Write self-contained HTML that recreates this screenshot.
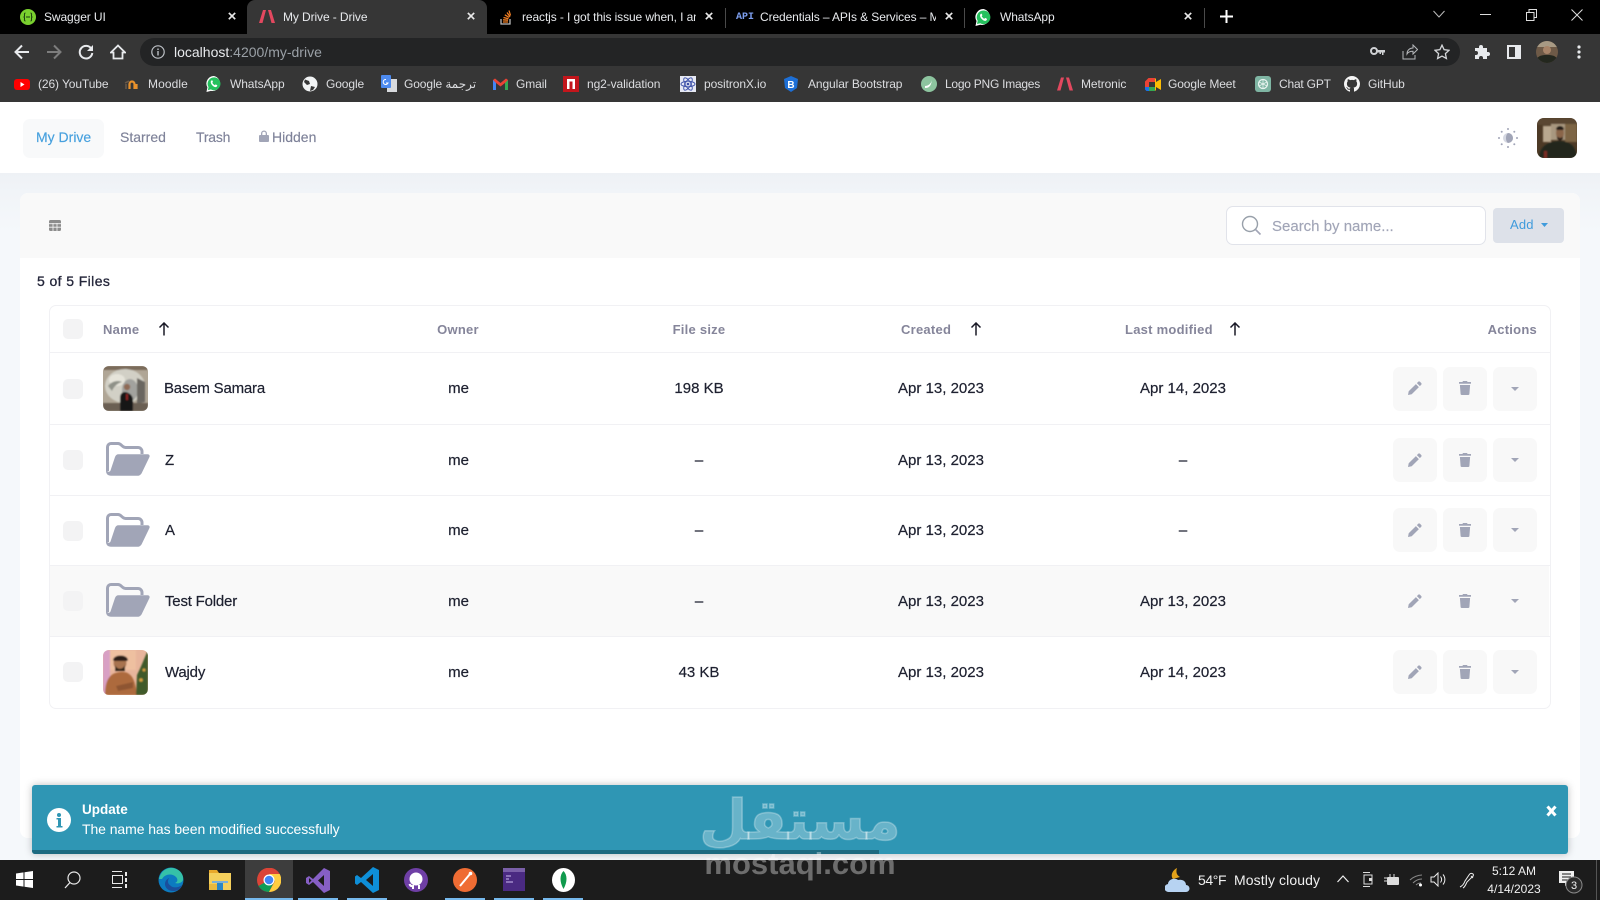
<!DOCTYPE html>
<html><head><meta charset="utf-8"><title>My Drive - Drive</title>
<style>
html,body{margin:0;padding:0;width:1600px;height:900px;overflow:hidden;background:#f5f8fb;font-family:"Liberation Sans","Noto Sans CJK SC",sans-serif}
.a,.t,svg.i{position:absolute}
.t{white-space:nowrap}
.tab{font-size:12px;color:#e8eaed;line-height:16px;top:9px;letter-spacing:-.1px}
.x{font-size:15px;color:#e8e8e8;top:8px;line-height:18px;font-weight:700;transform:translateX(-50%)}
.bm{font-size:12px;color:#dcdde0;line-height:16px;top:76px;letter-spacing:-.1px}
.nav{font-size:14px;line-height:18px;top:128px;color:#7e8299;letter-spacing:0;-webkit-text-stroke:.15px}
.h{font-size:13px;font-weight:700;line-height:16px;top:322px;color:#85859a;letter-spacing:.25px}
.c{transform:translateX(-50%)}
.r{font-size:15px;line-height:18px;color:#1e2130;letter-spacing:0;-webkit-text-stroke:.2px #1e2130}
.n{letter-spacing:-.2px}
.ln{position:absolute;left:49px;width:1501px;height:1px;background:#f1f1f4}
.cb{position:absolute;left:63px;width:20px;height:20px;border-radius:5px;background:#f3f3f4}
.btn{position:absolute;width:44px;height:44px;border-radius:7px;background:#f8f8f8}
.tb{position:absolute;top:898px;height:2px;background:#76b9ed}
</style></head>
<body>
<svg width="0" height="0" style="position:absolute">
<defs>
<symbol id="pen" viewBox="0 0 14 14"><path d="M10.2.8c.5-.5 1.3-.5 1.8 0l1.2 1.2c.5.5.5 1.3 0 1.8l-1.3 1.3-3-3zM7.9 3.1l3 3-7.2 7.2L0 14l.7-3.7z" fill="#a1a5b7"/></symbol>
<symbol id="trash" viewBox="0 0 12 14"><path d="M4 0h4l.6 1H12v1.8H0V1h3.4zM.9 4h10.2l-.7 9c0 .6-.6 1-1.1 1H2.700c-.5 0-1.100-.4-1.100-1z" fill="#a1a5b7"/></symbol>
<symbol id="car" viewBox="0 0 8 4"><path d="M0 0h8L4 4z" fill="#a1a5b7"/></symbol>
<symbol id="fold" viewBox="0 0 44 34"><path d="M1.500 29V5a3.500 3.500 0 0 1 3.500-3.500h7c3.500 0 4 4 7.500 4H32a4 4 0 0 1 4 4V12" fill="none" stroke="#a1a5b7" stroke-width="3"/><path d="M9 15c.6-1.800 1.800-2.800 3.500-2.800H41.500c1.800 0 2.600 1.300 1.900 2.900L36 30.500c-.9 2-2.300 3.300-4.500 3.300H5c-3 0-5-1.800-5-5V26l1 2.500c1 1.800 3 1.500 3.500 0z" fill="#a1a5b7"/></symbol>
<symbol id="arr" viewBox="0 0 12 14"><path d="M6 13.500V1M1.500 5.500 6 1l4.500 4.500" fill="none" stroke="#1a1a27" stroke-width="1.500"/></symbol>
</defs></svg>

<!-- Browser chrome -->
<div class="a" style="left:0;top:0;width:1600px;height:34px;background:#000"></div>
<div class="a" style="left:0;top:34px;width:1600px;height:68px;background:#363636"></div>
<div class="a" style="left:247px;top:0;width:240px;height:34px;background:#363636;border-radius:8px 8px 0 0"></div>
<div class="a" style="left:140px;top:38px;width:1320px;height:28px;background:#232425;border-radius:14px"></div>

<svg class="i" style="left:20px;top:9px" width="16" height="16" viewBox="0 0 16 16"><circle cx="8" cy="8" r="8" fill="#7ad02f"/><path d="M5.500 4c-1.500 0-1 2-1 3s-1 1-1 1 1 0 1 1-.5 3 1 3M10.500 4c1.500 0 1 2 1 3s1 1 1 1-1 0-1 1 .5 3-1 3M6 8h4" fill="none" stroke="#1a3a10" stroke-width="1"/></svg>
<div class="t tab" style="left:44px">Swagger UI</div>
<div class="t x" style="left:232px">×</div>
<svg class="i" style="left:259px;top:10px" width="16" height="13" viewBox="0 0 16 13"><path d="M4 0h3L3.500 13H0zM9 0h3l4 13h-3.500z" fill="#e3485f"/></svg>
<div class="t tab" style="left:283px">My Drive - Drive</div>
<div class="t x" style="left:471px">×</div>
<svg class="i" style="left:499px;top:9px" width="14" height="16" viewBox="0 0 14 16"><path d="M2 10v5h9v-5" fill="none" stroke="#bcbbbb" stroke-width="1.300"/><path d="M4 13h5M4 10.800l5 .4M4.500 8.500l5 1.300M5.800 5.800l4.400 2.700M8 3.500l3 4.200M10 1.500l1.500 5" stroke="#f48024" stroke-width="1.300" fill="none"/></svg>
<div class="t tab" style="left:522px;width:174px;overflow:hidden">reactjs - I got this issue when, I am</div>
<div class="t x" style="left:709px">×</div>
<div class="a" style="left:725px;top:8px;width:1px;height:20px;background:#4a4a4a"></div>
<div class="t" style="left:736px;top:11px;font:700 10px/14px 'Liberation Mono',monospace;color:#7d9ff0">API</div>
<div class="t tab" style="left:760px;width:176px;overflow:hidden">Credentials – APIs &amp; Services – My</div>
<div class="t x" style="left:949px">×</div>
<div class="a" style="left:964px;top:8px;width:1px;height:20px;background:#4a4a4a"></div>
<svg class="i" style="left:975px;top:9px" width="17" height="17" viewBox="0 0 17 17"><path d="M8.500 0a8 8 0 0 0-7 12L.5 17l4.700-1.200A8 8 0 1 0 8.500 0z" fill="#fff"/><path d="M8.500 1.500a6.800 6.800 0 0 0-5.800 10.300l-.7 3.200 3.200-.8A6.800 6.800 0 1 0 8.500 1.500z" fill="#25c15e"/><path d="M6 4.700c-1.500.8-1.200 3 .5 5 1.800 2 4 2.800 5 1.500.6-.8.500-1.400.3-1.500l-1.600-.8-.8.900c-1-.3-2.200-1.500-2.700-2.700l.7-.8-.6-1.600z" fill="#fff"/></svg>
<div class="t tab" style="left:1000px">WhatsApp</div>
<div class="t x" style="left:1188px">×</div>
<div class="a" style="left:1204px;top:8px;width:1px;height:20px;background:#4a4a4a"></div>
<svg class="i" style="left:1220px;top:10px" width="13" height="13"><path d="M6.500 0v13M0 6.500h13" stroke="#fff" stroke-width="2"/></svg>
<svg class="i" style="left:1433px;top:10px" width="12" height="8"><path d="M.5 1 6 7l5.500-6" stroke="#bbb" fill="none"/></svg>
<div class="a" style="left:1480px;top:14px;width:11px;height:1px;background:#ddd"></div>
<svg class="i" style="left:1526px;top:9px" width="11" height="12"><path d="M.5 3.500h7.500v8H.5zM3 3.500V.5h7.500v8H8" stroke="#ddd" fill="none"/></svg>
<svg class="i" style="left:1571px;top:9px" width="12" height="12"><path d="M.5.500l11 11M11.500.500l-11 11" stroke="#ddd"/></svg>

<svg class="i" style="left:14px;top:44px" width="16" height="16" viewBox="0 0 16 16"><path d="M15 8H2M8 1.500 1.500 8 8 14.500" stroke="#e8eaed" stroke-width="2" fill="none"/></svg>
<svg class="i" style="left:46px;top:44px" width="16" height="16" viewBox="0 0 16 16"><path d="M1 8h13M8 1.500 14.500 8 8 14.500" stroke="#7d7d7d" stroke-width="2" fill="none"/></svg>
<svg class="i" style="left:78px;top:44px" width="16" height="16" viewBox="0 0 16 16"><path d="M13.500 5A6.300 6.300 0 1 0 14.300 9" stroke="#e8eaed" stroke-width="2" fill="none"/><path d="M15 1v6H9z" fill="#e8eaed"/></svg>
<svg class="i" style="left:110px;top:44px" width="16" height="16" viewBox="0 0 16 16"><path d="M8 1.500.9 8.500h2.600v6h9v-6h2.600zM8 2.500" stroke="#e8eaed" stroke-width="1.800" fill="none"/></svg>
<svg class="i" style="left:151px;top:45px" width="14" height="14" viewBox="0 0 14 14"><circle cx="7" cy="7" r="6.200" stroke="#bdc1c6" stroke-width="1.200" fill="none"/><path d="M7 6v4.500M7 3.500v1.500" stroke="#bdc1c6" stroke-width="1.400"/></svg>
<div class="t" style="left:174px;top:44px;font-size:14px;line-height:16px;color:#e8eaed">localhost<span style="color:#9aa0a6">:4200/my-drive</span></div>

<svg class="i" style="left:1370px;top:47px" width="15" height="10" viewBox="0 0 15 10"><circle cx="4" cy="4" r="3" stroke="#cfd1d4" stroke-width="2" fill="none"/><path d="M6.500 3H15v2.500h-1.500V8H12V5.500h-1V7H9.500V5.500H6.500z" fill="#cfd1d4"/></svg>
<svg class="i" style="left:1402px;top:44px" width="16" height="16" viewBox="0 0 16 16"><path d="M1 7v8h12V11M5 10c0-4 3-6 6-6V1l4.500 4.500L11 10V7.300c-3 0-5 1-6 2.700z" stroke="#b5b7ba" fill="none"/></svg>
<svg class="i" style="left:1434px;top:44px" width="16" height="16" viewBox="0 0 16 16"><path d="M8 1.200l2.100 4.500 4.900.6-3.600 3.300 1 4.900L8 12.100l-4.400 2.400 1-4.900L1 6.300l4.900-.6z" stroke="#d5d7da" stroke-width="1.300" fill="none"/></svg>
<svg class="i" style="left:1474px;top:44px" width="16" height="16" viewBox="0 0 16 16"><path d="M1 4h4V3a2 2 0 0 1 4 0v1h4v4h1a2 2 0 0 1 0 4h-1v3H9v-1a2 2 0 0 0-4 0v1H1v-4h1a2 2 0 0 0 0-4H1z" fill="#e8eaed"/></svg>
<svg class="i" style="left:1507px;top:45px" width="14" height="14"><rect x="1" y="1" width="12" height="12" fill="none" stroke="#e8eaed" stroke-width="2"/><rect x="8" y="1" width="5" height="12" fill="#e8eaed"/></svg>
<svg class="i" style="left:1536px;top:41px" width="22" height="22" viewBox="0 0 22 22"><defs><clipPath id="av"><circle cx="11" cy="11" r="11"/></clipPath></defs><g clip-path="url(#av)"><rect width="22" height="22" fill="#6e5a47"/><rect y="0" width="22" height="6" fill="#a89a84"/><circle cx="11" cy="9" r="4" fill="#a88468"/><path d="M0 22c0-7 5-8 11-8s11 1 11 8z" fill="#23271e"/></g></svg>
<svg class="i" style="left:1577px;top:45px" width="4" height="14"><circle cx="2" cy="2" r="1.600" fill="#e8eaed"/><circle cx="2" cy="7" r="1.600" fill="#e8eaed"/><circle cx="2" cy="12" r="1.600" fill="#e8eaed"/></svg>

<!-- Bookmarks -->
<svg class="i" style="left:14px;top:79px" width="16" height="11"><rect width="16" height="11" rx="3" fill="#f00"/><path d="M6.500 3v5l4-2.500z" fill="#fff"/></svg>
<div class="t bm" style="left:38px">(26) YouTube</div>
<svg class="i" style="left:124px;top:78px" width="16" height="12" viewBox="0 0 16 12"><path d="M5.500 11V6a2.500 2.500 0 0 1 5 0v5M12.500 11V6" stroke="#e8912b" stroke-width="2.200" fill="none"/><path d="M1 5l4-2M2 11V6" stroke="#6a5a4a" stroke-width="1.500" fill="none"/></svg>
<div class="t bm" style="left:148px;letter-spacing:.1px">Moodle</div>
<svg class="i" style="left:206px;top:76px" width="16" height="16" viewBox="0 0 17 17"><path d="M8.500 0a8 8 0 0 0-7 12L.5 17l4.700-1.200A8 8 0 1 0 8.500 0z" fill="#fff"/><path d="M8.500 1.500a6.800 6.800 0 0 0-5.800 10.300l-.7 3.200 3.200-.8A6.800 6.800 0 1 0 8.500 1.500z" fill="#25c15e"/><path d="M6 4.700c-1.500.8-1.200 3 .5 5 1.800 2 4 2.800 5 1.500.6-.8.500-1.400.3-1.500l-1.600-.8-.8.900c-1-.3-2.200-1.500-2.700-2.700l.7-.8-.6-1.600z" fill="#fff"/></svg>
<div class="t bm" style="left:230px">WhatsApp</div>
<svg class="i" style="left:302px;top:76px" width="16" height="16" viewBox="0 0 16 16"><circle cx="8" cy="8" r="7.500" fill="#f1f3f4"/><path d="M3 3.500 7 5l1 3-3 1-3-3zM9 10l4 1-2 3-3 1z" fill="#363636"/></svg>
<div class="t bm" style="left:326px">Google</div>
<svg class="i" style="left:381px;top:75px" width="16" height="18" viewBox="0 0 16 18"><rect x="6" y="4" width="10" height="13" fill="#d8dadd"/><rect width="10" height="13" rx="1" fill="#4d8bf0"/><path d="M5 4.500a2.500 2.500 0 1 0 2 3.500H5" stroke="#fff" fill="none"/></svg>
<div class="t bm" style="left:404px;font-family:'Liberation Sans','DejaVu Sans',sans-serif">Google ترجمة</div>
<svg class="i" style="left:493px;top:78px" width="15" height="12" viewBox="0 0 15 12"><path d="M0 2v10h3V5l4.500 3.500L12 5v7h3V2L13 .5 7.500 5 2 .5z" fill="#ea4335"/><path d="M0 2v10h3V5z" fill="#4285f4"/><path d="M12 5v7h3V2z" fill="#34a853"/></svg>
<div class="t bm" style="left:516px">Gmail</div>
<svg class="i" style="left:563px;top:76px" width="16" height="16"><rect width="16" height="16" fill="#c3161c"/><path d="M4 13V3h8v10H9.500V5.500h-3V13z" fill="#fff"/></svg>
<div class="t bm" style="left:587px">ng2-validation</div>
<svg class="i" style="left:680px;top:76px" width="16" height="16" viewBox="0 0 16 16"><rect width="16" height="16" fill="#e6e9f4"/><g stroke="#3b4fa8" fill="none" stroke-width=".9"><ellipse cx="8" cy="8" rx="7" ry="2.800"/><ellipse cx="8" cy="8" rx="7" ry="2.800" transform="rotate(60 8 8)"/><ellipse cx="8" cy="8" rx="7" ry="2.800" transform="rotate(120 8 8)"/></g><circle cx="8" cy="8" r="1.300" fill="#3b4fa8"/></svg>
<div class="t bm" style="left:704px">positronX.io</div>
<svg class="i" style="left:783px;top:76px" width="16" height="16"><path d="M8 0l7 3-1 9-6 4-6-4-1-9z" fill="#1d6fd6"/><text x="8" y="12" font-size="10" font-weight="700" text-anchor="middle" fill="#fff" font-family="Liberation Sans">B</text></svg>
<div class="t bm" style="left:808px">Angular Bootstrap</div>
<svg class="i" style="left:921px;top:76px" width="16" height="16"><circle cx="8" cy="8" r="8" fill="#8dc49f"/><path d="M4 10c3 0 6-2 7-6-1 5-2 8-7 8z" fill="#fff"/></svg>
<div class="t bm" style="left:945px;letter-spacing:-.25px">Logo PNG Images</div>
<svg class="i" style="left:1057px;top:77px" width="16" height="14" viewBox="0 0 16 13"><path d="M4 0h3L3.500 13H0zM9 0h3l4 13h-3.500z" fill="#e3485f"/></svg>
<div class="t bm" style="left:1081px">Metronic</div>
<svg class="i" style="left:1145px;top:78px" width="16" height="13" viewBox="0 0 16 13"><path d="M0 3.500 3.500 0H10v4H4v5H0z" fill="#ea4335"/><path d="M0 9h4v4H1.500L0 11.500z" fill="#1a73e8"/><path d="M4 9h6v4H4z" fill="#34a853"/><path d="M4 4h6v5H4z" fill="#363636"/><path d="M10 0v13l1-1V1zM11 4l5-3v11l-5-3z" fill="#fbbc04"/></svg>
<div class="t bm" style="left:1168px">Google Meet</div>
<svg class="i" style="left:1255px;top:76px" width="16" height="16"><rect width="16" height="16" rx="3" fill="#7fb5a3"/><circle cx="8" cy="8" r="4.500" stroke="#e8f3ef" stroke-width="1.300" fill="none"/><path d="M8 3.500v9M4 6l8 4M12 6l-8 4" stroke="#e8f3ef" stroke-width=".8"/></svg>
<div class="t bm" style="left:1279px;letter-spacing:-.2px">Chat GPT</div>
<svg class="i" style="left:1344px;top:76px" width="16" height="16" viewBox="0 0 16 16"><path fill="#f5f5f5" d="M8 0C3.580 0 0 3.580 0 8c0 3.540 2.290 6.530 5.470 7.590.4.070.55-.17.55-.38 0-.19-.01-.82-.01-1.490-2.010.37-2.530-.49-2.690-.94-.09-.23-.48-.94-.82-1.130-.28-.15-.68-.52-.01-.53.63-.01 1.080.58 1.230.82.720 1.210 1.870.870 2.330.660.070-.52.280-.870.510-1.070-1.780-.2-3.640-.89-3.640-3.950 0-.870.310-1.590.820-2.150-.08-.2-.36-1.020.08-2.120 0 0 .670-.21 2.200.820.640-.18 1.320-.27 2-.27s1.360.09 2 .27c1.530-1.040 2.200-.82 2.200-.82.440 1.100.160 1.920.080 2.120.510.560.820 1.270.820 2.150 0 3.070-1.870 3.750-3.650 3.950.290.250.540.730.540 1.480 0 1.070-.01 1.930-.01 2.200 0 .21.150.46.550.38A8.010 8.010 0 0 0 16 8c0-4.420-3.580-8-8-8z"/></svg>
<div class="t bm" style="left:1368px">GitHub</div>

<!-- App nav -->
<div class="a" style="left:0;top:102px;width:1600px;height:71px;background:#fff"></div>
<div class="a" style="left:0;top:173px;width:1600px;height:687px;background:linear-gradient(#eef1f5 0,#f1f4f8 20px,#f5f8fb 60px)"></div>
<div class="a" style="left:23px;top:119px;width:81px;height:39px;background:#f8f9fa;border-radius:7px"></div>
<div class="t nav" style="left:36px;color:#46a0de;-webkit-text-stroke:.15px #46a0de">My Drive</div>
<div class="t nav" style="left:120px">Starred</div>
<div class="t nav" style="left:196px;letter-spacing:-.2px">Trash</div>
<svg class="i" style="left:259px;top:130px" width="10" height="12" viewBox="0 0 10 12"><path d="M2 5V3.500a3 3 0 0 1 6 0V5h1a1 1 0 0 1 1 1v5a1 1 0 0 1-1 1H1a1 1 0 0 1-1-1V6a1 1 0 0 1 1-1zM3.300 5h3.400V3.500a1.700 1.700 0 0 0-3.400 0z" fill="#a1a5b7"/></svg>
<div class="t nav" style="left:272px">Hidden</div>
<svg class="i" style="left:1497px;top:127px" width="22" height="22" viewBox="0 0 22 22"><circle cx="11" cy="11" r="5" fill="#d5d8e2"/><path d="M11 6a5 5 0 0 1 0 10c-1.500-1-2-3-2-5s.5-4 2-5z" fill="#a1a5b7"/><g fill="#a1a5b7"><circle cx="11" cy="2" r="1"/><circle cx="11" cy="20" r="1"/><circle cx="2" cy="11" r="1"/><circle cx="20" cy="11" r="1"/><circle cx="4.700" cy="4.700" r="1"/><circle cx="17.300" cy="4.700" r="1"/><circle cx="4.700" cy="17.300" r="1"/><circle cx="17.300" cy="17.300" r="1"/></g></svg>
<svg class="i" style="left:1537px;top:118px" width="40" height="40" viewBox="0 0 40 40"><defs><clipPath id="av2"><rect width="40" height="40" rx="7"/></clipPath><filter id="b1"><feGaussianBlur stdDeviation=".8"/></filter></defs><g clip-path="url(#av2)"><rect width="40" height="40" fill="#4d3a26"/><g filter="url(#b1)"><rect x="0" y="0" width="40" height="7" fill="#5a4630"/><rect x="6" y="8" width="8" height="16" fill="#b9a88f"/><rect x="28" y="6" width="12" height="18" fill="#7d6545"/><rect x="14" y="6" width="14" height="16" fill="#a8977f"/><ellipse cx="23" cy="15" rx="4" ry="6.500" fill="#8a6548"/><path d="M19 11c1-4 7-4 8 0l-1 1h-6z" fill="#241a14"/><path d="M20 18c1.500 2.500 5 2.500 6 0l0 3-3 2-3-2z" fill="#2b1e16"/><path d="M2 40c0-10 8-17 20-17s17 6 18 17z" fill="#20261b"/><rect x="7" y="33" width="3" height="7" fill="#7a2a20"/></g></g></svg>

<!-- Card -->
<div class="a" style="left:20px;top:193px;width:1560px;height:645px;background:#fff;border-radius:8px;overflow:hidden"><div style="height:65px;background:#f9f9f9"></div></div>
<svg class="i" style="left:49px;top:220px" width="12" height="11" viewBox="0 0 12 11"><rect width="12" height="11" rx="1.500" fill="#8c8c8c"/><path d="M0 3.700h12M0 7.200h12M4 3v8M8 3v8" stroke="#f5f5f5" stroke-width=".8"/></svg>
<div class="a" style="left:1226px;top:206px;width:258px;height:37px;background:#fff;border:1px solid #e1e3ea;border-radius:7px"></div>
<svg class="i" style="left:1241px;top:215px" width="21" height="21" viewBox="0 0 21 21"><circle cx="9" cy="9" r="7.500" fill="none" stroke="#98a0aa" stroke-width="1.400"/><path d="M14.500 14.500 19.500 19.500" stroke="#a1a5b7" stroke-width="1.600"/></svg>
<div class="t" style="left:1272px;top:218px;font-size:15px;line-height:18px;color:#a1a5b7;-webkit-text-stroke:.15px #a1a5b7">Search by name...</div>
<div class="a" style="left:1493px;top:208px;width:71px;height:35px;background:#dde1e9;border-radius:4px"></div>
<div class="t" style="left:1510px;top:216px;font-size:13px;line-height:17px;color:#3f9bdc;letter-spacing:.2px">Add</div>
<svg class="i" style="left:1541px;top:223px" width="7" height="4"><path d="M0 0h7L3.500 4z" fill="#3f9bdc"/></svg>
<div class="t" style="left:37px;top:272px;font-size:14px;line-height:18px;color:#24263a;letter-spacing:.4px;-webkit-text-stroke:.3px #24263a">5 of 5 Files</div>

<!-- Table -->
<div class="a" style="left:49px;top:305px;width:1500px;height:402px;border:1px solid #f1f1f4;border-radius:7px"></div>
<div class="a" style="left:50px;top:565px;width:1499px;height:71px;background:#f9f9f9"></div>
<div class="ln" style="top:352px"></div><div class="ln" style="top:424px"></div><div class="ln" style="top:495px"></div><div class="ln" style="top:565px"></div><div class="ln" style="top:636px"></div>

<div class="cb" style="top:319px"></div>
<div class="t h" style="left:103px">Name</div>
<svg class="i" style="left:158px;top:322px" width="12" height="14"><use href="#arr"/></svg>
<div class="t h c" style="left:458px">Owner</div>
<div class="t h c" style="left:699px">File size</div>
<div class="t h" style="left:901px">Created</div>
<svg class="i" style="left:970px;top:322px" width="12" height="14"><use href="#arr"/></svg>
<div class="t h" style="left:1125px">Last modified</div>
<svg class="i" style="left:1229px;top:322px" width="12" height="14"><use href="#arr"/></svg>
<div class="t h" style="right:63px">Actions</div>

<!-- Row 1 -->
<div class="cb" style="top:379px"></div>
<svg class="i" style="left:103px;top:366px" width="45" height="45" viewBox="0 0 45 45"><defs><clipPath id="p1"><rect width="45" height="45" rx="6"/></clipPath><filter id="b2"><feGaussianBlur stdDeviation=".8"/></filter></defs><g clip-path="url(#p1)"><rect width="45" height="45" fill="#b0a696"/><g filter="url(#b2)"><rect x="0" y="0" width="45" height="4" fill="#7a6a5a"/><ellipse cx="22" cy="20" rx="20" ry="17" fill="#d2d0c6"/><ellipse cx="27" cy="24" rx="8" ry="11" fill="#a2a29e"/><ellipse cx="14" cy="14" rx="8" ry="6" fill="#e6e4da"/><path d="M34 12l8 4v20l-8 2z" fill="#6a6660"/><path d="M5 20c4-5 10-6 14-4-4 1-8 4-10 9z" fill="#8f9188"/><rect x="0" y="37" width="45" height="8" fill="#6a5e52"/><path d="M17 45V32c0-4 2-6 5-6s8 3 8 8v11z" fill="#191818"/><circle cx="24" cy="21" r="3.200" fill="#8f6a54"/><rect x="23" y="28" width="2" height="6" fill="#8a2020"/></g></g></svg>
<div class="t r n" style="left:164px;top:380px">Basem Samara</div>
<div class="t r c" style="left:458.500px;top:380px">me</div>
<div class="t r c" style="left:699px;top:380px">198 KB</div>
<div class="t r c" style="left:941px;top:380px">Apr 13, 2023</div>
<div class="t r c" style="left:1183px;top:380px">Apr 14, 2023</div>
<div class="btn" style="left:1393px;top:367px"></div><div class="btn" style="left:1443px;top:367px"></div><div class="btn" style="left:1493px;top:367px"></div>
<svg class="i" style="left:1408px;top:381px" width="14" height="14"><use href="#pen"/></svg>
<svg class="i" style="left:1459px;top:381px" width="12" height="14"><use href="#trash"/></svg>
<svg class="i" style="left:1511px;top:387px" width="8" height="4"><use href="#car"/></svg>

<!-- Row 2 -->
<div class="cb" style="top:450px"></div>
<svg class="i" style="left:106px;top:442px" width="44" height="34"><use href="#fold"/></svg>
<div class="t r n" style="left:165px;top:452px">Z</div>
<div class="t r c" style="left:458.500px;top:452px">me</div>
<div class="t r c" style="left:699px;top:452px">–</div>
<div class="t r c" style="left:941px;top:452px">Apr 13, 2023</div>
<div class="t r c" style="left:1183px;top:452px">–</div>
<div class="btn" style="left:1393px;top:438px"></div><div class="btn" style="left:1443px;top:438px"></div><div class="btn" style="left:1493px;top:438px"></div>
<svg class="i" style="left:1408px;top:453px" width="14" height="14"><use href="#pen"/></svg>
<svg class="i" style="left:1459px;top:453px" width="12" height="14"><use href="#trash"/></svg>
<svg class="i" style="left:1511px;top:458px" width="8" height="4"><use href="#car"/></svg>

<!-- Row 3 -->
<div class="cb" style="top:521px"></div>
<svg class="i" style="left:106px;top:513px" width="44" height="34"><use href="#fold"/></svg>
<div class="t r n" style="left:165px;top:522px">A</div>
<div class="t r c" style="left:458.500px;top:522px">me</div>
<div class="t r c" style="left:699px;top:522px">–</div>
<div class="t r c" style="left:941px;top:522px">Apr 13, 2023</div>
<div class="t r c" style="left:1183px;top:522px">–</div>
<div class="btn" style="left:1393px;top:508px"></div><div class="btn" style="left:1443px;top:508px"></div><div class="btn" style="left:1493px;top:508px"></div>
<svg class="i" style="left:1408px;top:523px" width="14" height="14"><use href="#pen"/></svg>
<svg class="i" style="left:1459px;top:523px" width="12" height="14"><use href="#trash"/></svg>
<svg class="i" style="left:1511px;top:528px" width="8" height="4"><use href="#car"/></svg>

<!-- Row 4 -->
<div class="cb" style="top:591px"></div>
<svg class="i" style="left:106px;top:583px" width="44" height="34"><use href="#fold"/></svg>
<div class="t r n" style="left:165px;top:593px">Test Folder</div>
<div class="t r c" style="left:458.500px;top:593px">me</div>
<div class="t r c" style="left:699px;top:593px">–</div>
<div class="t r c" style="left:941px;top:593px">Apr 13, 2023</div>
<div class="t r c" style="left:1183px;top:593px">Apr 13, 2023</div>
<svg class="i" style="left:1408px;top:594px" width="14" height="14"><use href="#pen"/></svg>
<svg class="i" style="left:1459px;top:594px" width="12" height="14"><use href="#trash"/></svg>
<svg class="i" style="left:1511px;top:599px" width="8" height="4"><use href="#car"/></svg>

<!-- Row 5 -->
<div class="cb" style="top:662px"></div>
<svg class="i" style="left:103px;top:650px" width="45" height="45" viewBox="0 0 45 45"><defs><clipPath id="p2"><rect width="45" height="45" rx="6"/></clipPath><filter id="b3"><feGaussianBlur stdDeviation=".8"/></filter></defs><g clip-path="url(#p2)"><rect width="45" height="45" fill="#e8b59c"/><g filter="url(#b3)"><rect x="0" y="0" width="7" height="45" fill="#d8a0c4"/><rect x="7" y="0" width="26" height="20" fill="#eec0a0"/><circle cx="17" cy="13" r="6.500" fill="#a8734f"/><path d="M10 10c1-6 14-6 15 0l-1 1H11z" fill="#2a1c14"/><path d="M12 15c2 5 8 5 10 0v6H12z" fill="#2e2018"/><path d="M2 45c0-14 4-22 15-23s15 6 17 23z" fill="#ad6b3d"/><path d="M13 36l17-4v6l-15 3z" fill="#8e5530"/><path d="M45 0v45H33l1-20c4-8 7-16 11-25z" fill="#3f5a2a"/><circle cx="38" cy="30" r="1.800" fill="#d8a040"/><circle cx="41" cy="20" r="1.500" fill="#d8a040"/></g></g></svg>
<div class="t r n" style="left:165px;top:664px">Wajdy</div>
<div class="t r c" style="left:458.500px;top:664px">me</div>
<div class="t r c" style="left:699px;top:664px">43 KB</div>
<div class="t r c" style="left:941px;top:664px">Apr 13, 2023</div>
<div class="t r c" style="left:1183px;top:664px">Apr 14, 2023</div>
<div class="btn" style="left:1393px;top:650px"></div><div class="btn" style="left:1443px;top:650px"></div><div class="btn" style="left:1493px;top:650px"></div>
<svg class="i" style="left:1408px;top:665px" width="14" height="14"><use href="#pen"/></svg>
<svg class="i" style="left:1459px;top:665px" width="12" height="14"><use href="#trash"/></svg>
<svg class="i" style="left:1511px;top:670px" width="8" height="4"><use href="#car"/></svg>

<!-- Toast -->
<div class="a" style="left:32px;top:785px;width:1536px;height:69px;background:#2f96b4;border-radius:3px;box-shadow:0 0 8px rgba(0,0,0,.25);overflow:hidden"><div class="a" style="left:0;bottom:0;width:847px;height:4px;background:#1d6a80"></div></div>
<svg class="i" style="left:47px;top:808px" width="24" height="24" viewBox="0 0 24 24"><circle cx="12" cy="12" r="12" fill="#fff"/><path d="M9.500 10h4.500v8h1.500v1.500h-6V18H11v-6.500H9.500z" fill="#2f96b4"/><circle cx="12" cy="7" r="2" fill="#2f96b4"/></svg>
<div class="t" style="left:82px;top:802px;font-size:13.500px;line-height:16px;font-weight:700;color:#fff">Update</div>
<div class="t" style="left:82px;top:820px;font-size:14px;line-height:18px;color:#fff;letter-spacing:-.08px">The name has been modified successfully</div>
<svg class="i" style="left:1546px;top:805px" width="11" height="12"><path d="M1.500 1.500l8 9M9.500 1.500l-8 9" stroke="#fff" stroke-width="3"/></svg>

<!-- Taskbar -->
<div class="a" style="left:0;top:860px;width:1600px;height:40px;background:#1c1c1c"></div>
<div class="a" style="left:245px;top:860px;width:48px;height:40px;background:#3d3d3d"></div>
<svg class="i" style="left:16px;top:871px" width="17" height="17"><path d="M0 2.500 7.500 1.400v6.600H0zM8.500 1.200 17 0v8H8.500zM0 9h7.500v6.600L0 14.500zM8.500 9H17v8l-8.500-1.200z" fill="#fff"/></svg>
<svg class="i" style="left:64px;top:871px" width="17" height="18" viewBox="0 0 17 18"><circle cx="10" cy="7" r="6" fill="none" stroke="#e8e8e8" stroke-width="1.200"/><path d="M6 11.500 1 17" stroke="#e8e8e8" stroke-width="1.300"/></svg>
<svg class="i" style="left:112px;top:871px" width="16" height="17" viewBox="0 0 16 17"><path d="M0 .5h10M0 16.500h10" stroke="#e8e8e8"/><rect x=".5" y="4.500" width="10" height="8" fill="none" stroke="#e8e8e8"/><path d="M14 1v4M14 7v4M14 13v4" stroke="#e8e8e8" stroke-width="2"/></svg>
<svg class="i" style="left:158px;top:867px" width="26" height="26" viewBox="0 0 26 26"><circle cx="13" cy="13" r="12.500" fill="#0c7bc0"/><path d="M1 12C3 3 10 0 15 1c6 1 11 6 10 12-1 3-5 4-8 3 3-1 3-4 1-6-4-4-11-3-14 2z" fill="#35c1a8"/><path d="M7 17c0 5 6 9 13 6 2-1 3-3 4-5-4 3-9 3-11 1-3-2-4-4-2-8-2 1-4 3-4 6z" fill="#1a4f9c"/></svg>
<svg class="i" style="left:209px;top:870px" width="22" height="20" viewBox="0 0 22 20"><path d="M0 0h8l2 3H0z" fill="#e8a82b"/><rect y="3" width="22" height="17" fill="#f4cf5c"/><rect x="8" y="12" width="6" height="8" fill="#2b86c5"/><rect x="0" y="14" width="8" height="6" fill="#e9b93f"/><path d="M3 12h16" stroke="#7ab0d9" stroke-width="2"/></svg>
<svg class="i" style="left:257px;top:868px" width="24" height="24" viewBox="0 0 24 24"><circle cx="12" cy="12" r="12" fill="#db4437"/><path d="M12 12 1.500 18A12 12 0 0 0 12 24L18 12z" fill="#0f9d58"/><path d="M12 6h10.700A12 12 0 0 1 12 24l6-11z" fill="#ffcd40"/><path d="M1.600 6A12 12 0 0 1 22.700 6H12a6 6 0 0 0-5.200 9L1.600 6z" fill="#db4437"/><circle cx="12" cy="12" r="5.500" fill="#fff"/><circle cx="12" cy="12" r="4.300" fill="#4285f4"/></svg>
<svg class="i" style="left:306px;top:868px" width="24" height="25" viewBox="0 0 24 25"><path d="M18 0l6 3v19l-6 3L7 14l-4 3-3-2V10l3-2 4 3z" fill="#865fc5"/><path d="M18 7l-6 5.500L18 18zM3 10v5l2.500-2.500z" fill="#1c1c1c"/></svg>
<svg class="i" style="left:355px;top:867px" width="24" height="26" viewBox="0 0 24 26"><path d="M18 0l6 3v20l-6 3L6 15l-4 3-2-1.500V9.500L2 8l4 3z" fill="#0e8fd8"/><path d="M18 7l-7 6 7 6z" fill="#1c1c1c"/></svg>
<svg class="i" style="left:404px;top:868px" width="24" height="24" viewBox="0 0 24 24"><circle cx="12" cy="12" r="12" fill="#6f3fa5"/><circle cx="12" cy="11" r="6.500" fill="#fff"/><path d="M9 21v-3c-2 .5-3-.5-3.500-2M15 21v-4" stroke="#fff" stroke-width="2" fill="none"/></svg>
<svg class="i" style="left:453px;top:868px" width="24" height="24" viewBox="0 0 24 24"><circle cx="12" cy="12" r="12" fill="#ef6c33"/><path d="M7 18 17 6" stroke="#fff" stroke-width="2"/><circle cx="17.500" cy="5.500" r="1.800" fill="#fff"/></svg>
<svg class="i" style="left:503px;top:868px" width="22" height="23"><rect width="22" height="23" fill="#4a2a82"/><rect y="0" width="22" height="4" fill="#7a5fa8"/><path d="M3 8h5M3 11h3M3 14h7" stroke="#cdbcf0"/></svg>
<svg class="i" style="left:552px;top:868px" width="23" height="24"><ellipse cx="11.500" cy="12" rx="11.500" ry="12" fill="#fff"/><path d="M11.500 3c4 4 4 11 0 18-4-7-4-14 0-18z" fill="#109a4d"/></svg>
<div class="tb" style="left:245px;width:48px"></div><div class="tb" style="left:298px;width:40px"></div><div class="tb" style="left:347px;width:40px"></div><div class="tb" style="left:445px;width:40px"></div><div class="tb" style="left:494px;width:40px"></div><div class="tb" style="left:543px;width:40px"></div>

<svg class="i" style="left:1165px;top:868px" width="25" height="25" viewBox="0 0 25 25"><path d="M12 0c-1 3-1 7 3 9l-7 2C5 7 8 2 12 0z" fill="#e3a21a"/><path d="M4 24a4 4 0 0 1-1-8c0-4 6-7 10-4 4-1 8 1 8 5a3.500 3.500 0 0 1 0 7z" fill="#b7d3f2"/></svg>
<div class="t" style="left:1198px;top:871px;font-size:14px;line-height:18px;color:#f0f0f0;letter-spacing:-.4px">54°F</div>
<div class="t" style="left:1234px;top:871px;font-size:14px;line-height:18px;color:#f0f0f0;letter-spacing:.1px">Mostly cloudy</div>
<svg class="i" style="left:1337px;top:875px" width="12" height="8"><path d="M.5 7 6 1l5.500 6" fill="none" stroke="#eee" stroke-width="1.200"/></svg>
<svg class="i" style="left:1362px;top:871px" width="12" height="17"><path d="M2 4h8v9H2zM1 1.500h7M1 15.500h7" fill="none" stroke="#ddd"/><rect x="7" y="7" width="3" height="3" fill="#ddd"/></svg>
<svg class="i" style="left:1384px;top:874px" width="15" height="11"><rect x="3" y="3" width="12" height="8" fill="#ddd" rx="1"/><path d="M0 4h3M0 7h3M6 0v3M10 0v3" stroke="#ddd"/></svg>
<svg class="i" style="left:1409px;top:873px" width="14" height="14" viewBox="0 0 14 14"><path d="M1 7c3-3 8-5 12-5M4 10c2-2 5-4 9-4M7 12c1-1 3-2 5-2" fill="none" stroke="#888"/><circle cx="11.500" cy="12" r="1.500" fill="#fff"/></svg>
<svg class="i" style="left:1430px;top:872px" width="17" height="15" viewBox="0 0 17 15"><path d="M1 5h3l4-4v13L4 10H1zM10.500 4.500c1.500 2 1.500 4 0 6M13 2.500c2.500 3 2.500 7 0 10" fill="none" stroke="#eee"/></svg>
<svg class="i" style="left:1459px;top:872px" width="16" height="17" viewBox="0 0 16 17"><path d="M1 15c2-1 4-3 5-6l4-6c1-2 3-2 4-1s0 3-2 4L8 10c-1 2-2 5-4 6M12 4l2 2" fill="none" stroke="#eee"/></svg>
<div class="t c" style="left:1514px;top:863px;font-size:12px;line-height:16px;color:#f0f0f0">5:12 AM</div>
<div class="t c" style="left:1514px;top:881px;font-size:12px;line-height:16px;color:#f0f0f0">4/14/2023</div>
<svg class="i" style="left:1559px;top:870px" width="24" height="24" viewBox="0 0 24 24"><path d="M0 1h15v12h-6l-3 3v-3H0z" fill="#f0f0f0"/><path d="M3 4h9M3 7h9M3 10h6" stroke="#1c1c1c"/><circle cx="15" cy="15" r="8" fill="#2a2a2a" stroke="#888"/><text x="15" y="19" font-size="11" text-anchor="middle" fill="#f0f0f0" font-family="Liberation Sans">3</text></svg>
<div class="a" style="left:1596px;top:860px;width:1px;height:40px;background:#555"></div>

<!-- Watermark -->
<div class="t" style="left:800px;top:780px;transform:translateX(-50%);font:700 55px/80px 'DejaVu Sans',sans-serif;color:rgba(255,255,255,.28);-webkit-text-stroke:1.500px rgba(255,255,255,.28)">مستقل</div>
<div class="t" style="left:800px;top:846px;transform:translateX(-50%);font:700 31px/36px 'Liberation Sans',sans-serif;color:rgba(255,255,255,.36)">mostaqi.com</div>
</body></html>
